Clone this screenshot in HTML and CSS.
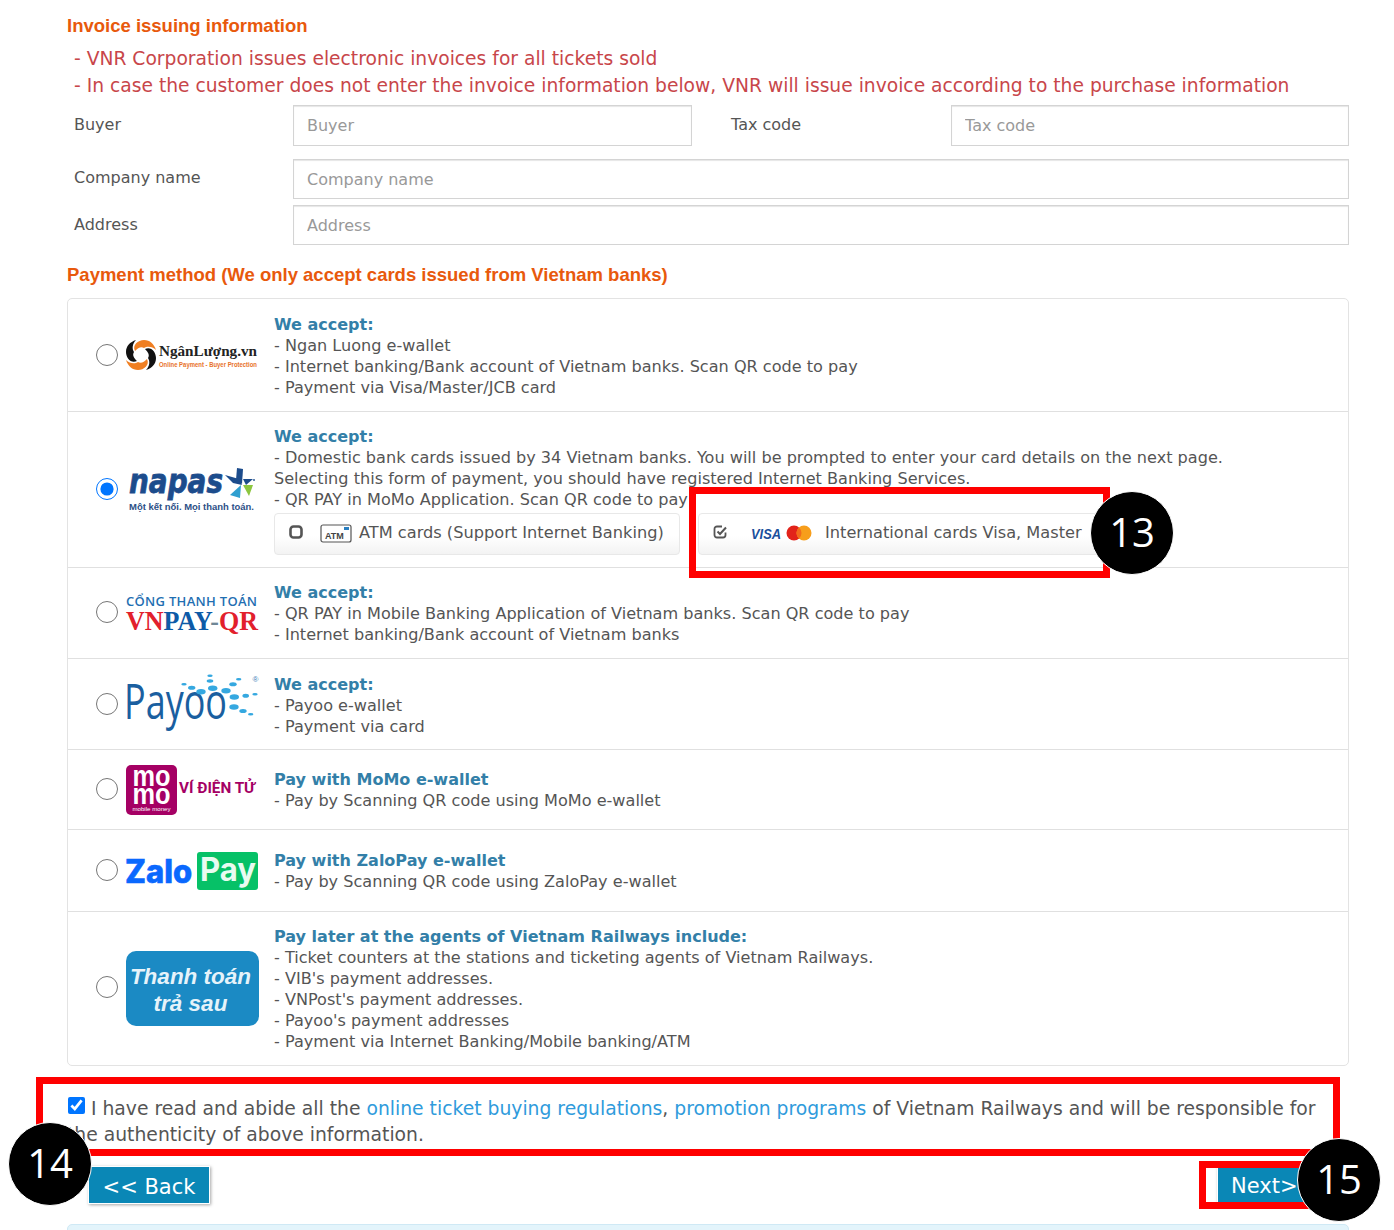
FILE: index.html
```html
<!DOCTYPE html>
<html lang="en">
<head>
    <meta charset="UTF-8">
    <meta name="viewport" content="width=device-width, initial-scale=1.0">
    <title>Payment</title>
    <link rel="stylesheet" href="styles.css">
</head>
<body>
    <div class="page">
        <h3 class="section-title first">Invoice issuing information</h3>
        <div class="invoice-note">
            <p>- VNR Corporation issues electronic invoices for all tickets sold</p>
            <p>- In case the customer does not enter the invoice information below, VNR will issue invoice according to the purchase information</p>
        </div>

        <div class="invoice-form">
            <div class="form-row buyer-row">
                <label>Buyer</label>
                <input type="text" placeholder="Buyer">
                <label class="tax-label">Tax code</label>
                <input type="text" placeholder="Tax code">
            </div>
            <div class="form-row company-row">
                <label>Company name</label>
                <input type="text" placeholder="Company name">
            </div>
            <div class="form-row address-row">
                <label>Address</label>
                <input type="text" placeholder="Address">
            </div>
        </div>

        <h3 class="section-title">Payment method (We only accept cards issued from Vietnam banks)</h3>

        <div class="pay-panel">
            <div class="pay-row row-nl">
                <input type="radio" name="pay">
                <div class="logo">
                    <svg width="134" height="40" viewBox="0 0 134 40">
                        <g transform="translate(15 20)">
                            <path fill="#f07f22" d="M-6-4C-9-10-3-15 3-15 9-15 13-11 15-5 11-9 6-9 3-7 0-9-3-7-6-4Z"/>
                            <path fill="#111" d="M-6-4C-9-10-3-15 3-15 9-15 13-11 15-5 11-9 6-9 3-7 0-9-3-7-6-4Z" transform="rotate(90)"/>
                            <path fill="#f07f22" d="M-6-4C-9-10-3-15 3-15 9-15 13-11 15-5 11-9 6-9 3-7 0-9-3-7-6-4Z" transform="rotate(180)"/>
                            <path fill="#111" d="M-6-4C-9-10-3-15 3-15 9-15 13-11 15-5 11-9 6-9 3-7 0-9-3-7-6-4Z" transform="rotate(270)"/>
                        </g>
                        <text class="nl-name" x="33" y="21" textLength="98" lengthAdjust="spacingAndGlyphs">NgânLượng.vn</text>
                        <text class="nl-sub" x="33" y="32" textLength="98" lengthAdjust="spacingAndGlyphs">Online Payment - Buyer Protection</text>
                    </svg>
                </div>
                <div class="pay-text">
                    <h4>We accept:</h4>
                    <p>- Ngan Luong e-wallet</p>
                    <p>- Internet banking/Bank account of Vietnam banks. Scan QR code to pay</p>
                    <p>- Payment via Visa/Master/JCB card</p>
                </div>
            </div>

            <div class="pay-row row-napas">
                <input type="radio" name="pay" checked>
                <div class="logo">
                    <svg width="134" height="60" viewBox="0 0 134 60">
                        <text class="napas-name" x="3" y="33" textLength="94" lengthAdjust="spacingAndGlyphs">napas</text>
                        <polygon fill="#1c4c8c" points="111,8 117,9 116,24 110,20"/>
                        <polygon fill="#1c4c8c" points="99,15 113,19 116,25 107,23"/>
                        <polygon fill="#1c4c8c" points="117,19 127,19 120,25"/>
                        <polygon fill="#8cc63f" points="117,25 127,25 123,36"/>
                        <polygon fill="#2f9fd0" points="115,25 104,35 114,38"/>
                        <circle cx="128" cy="20" r="0.900" fill="#1c4c8c"/>
                        <text class="napas-sub" x="3" y="50" textLength="125" lengthAdjust="spacingAndGlyphs">Một kết nối. Mọi thanh toán.</text>
                    </svg>
                </div>
                <div class="pay-text">
                    <h4>We accept:</h4>
                    <p>- Domestic bank cards issued by 34 Vietnam banks. You will be prompted to enter your card details on the next page.</p>
                    <p>Selecting this form of payment, you should have registered Internet Banking Services.</p>
                    <p>- QR PAY in MoMo Application. Scan QR code to pay</p>
                    <div class="card-options">
                        <div class="card-btn atm-btn">
                            <svg class="tick" width="16" height="16" viewBox="0 0 16 16">
                                <rect x="2.500" y="2.500" width="11" height="11" rx="3" fill="none" stroke="#555" stroke-width="2.600"/>
                            </svg>
                            <svg class="atm-icon" width="32" height="20" viewBox="0 0 32 20">
                                <rect x="1" y="2" width="30" height="17" rx="2" fill="#fff" stroke="#555" stroke-width="1.200"/>
                                <rect x="24" y="4" width="5" height="3" fill="#2a7fc0"/>
                                <text class="atm-text" x="5" y="16">ATM</text>
                            </svg>
                            <span>ATM cards (Support Internet Banking)</span>
                        </div>
                        <div class="card-btn intl-btn">
                            <svg class="tick" width="16" height="16" viewBox="0 0 16 16">
                                <path d="M13.500 8.500V11a2.500 2.500 0 0 1-2.500 2.500H5A2.500 2.500 0 0 1 2.500 11V5A2.500 2.500 0 0 1 5 2.500h5" fill="none" stroke="#555" stroke-width="1.800"/>
                                <path d="M5.500 7.500l2.500 2.500 6-6.500" fill="none" stroke="#555" stroke-width="2"/>
                            </svg>
                            <svg class="visa-icon" width="64" height="20" viewBox="0 0 64 20">
                                <text class="visa-text" x="1" y="16" textLength="30" lengthAdjust="spacingAndGlyphs">VISA</text>
                                <circle cx="44" cy="10" r="7.500" fill="#e2231a"/>
                                <circle cx="54" cy="10" r="7.500" fill="#f79e1b"/>
                                <path d="M49 4.400a7.500 7.500 0 0 1 0 11.200 7.500 7.500 0 0 1 0-11.200z" fill="#f26a1b"/>
                            </svg>
                            <span>International cards Visa, Master</span>
                        </div>
                    </div>
                </div>
            </div>

            <div class="pay-row row-vnpay">
                <input type="radio" name="pay">
                <div class="logo">
                    <svg width="134" height="50" viewBox="0 0 134 50">
                        <text class="vnpay-top" x="0" y="18" textLength="131" lengthAdjust="spacing">CỔNG THANH TOÁN</text>
                        <text class="vnpay-name" x="0" y="42" textLength="132" lengthAdjust="spacingAndGlyphs"><tspan class="red">VN</tspan><tspan class="blue">PAY</tspan><tspan class="grey">-</tspan><tspan class="red">QR</tspan></text>
                    </svg>
                </div>
                <div class="pay-text">
                    <h4>We accept:</h4>
                    <p>- QR PAY in Mobile Banking Application of Vietnam banks. Scan QR code to pay</p>
                    <p>- Internet banking/Bank account of Vietnam banks</p>
                </div>
            </div>

            <div class="pay-row row-payoo">
                <input type="radio" name="pay">
                <div class="logo">
                    <svg width="134" height="64" viewBox="0 0 134 64">
                        <text class="payoo-name" x="-2" y="47" textLength="103" lengthAdjust="spacingAndGlyphs">Payoo</text>
                        <g fill="#35a8e0">
                            <ellipse cx="58" cy="12.300" rx="2.700" ry="1.300"/>
                            <ellipse cx="65.700" cy="15.700" rx="3.700" ry="2"/>
                            <ellipse cx="75" cy="19.700" rx="4.700" ry="2.700"/>
                            <ellipse cx="86.700" cy="16.300" rx="4.700" ry="2.700"/>
                            <ellipse cx="84" cy="9" rx="3.300" ry="1.700"/>
                            <ellipse cx="84" cy="3.700" rx="2.700" ry="1.300"/>
                            <ellipse cx="100" cy="18.700" rx="4.700" ry="2.700"/>
                            <ellipse cx="107" cy="12.300" rx="3.700" ry="2"/>
                            <ellipse cx="112.700" cy="7.300" rx="2.700" ry="1.300"/>
                            <ellipse cx="108.300" cy="25" rx="4.700" ry="2.700"/>
                            <ellipse cx="119.700" cy="23.700" rx="3.300" ry="2"/>
                            <ellipse cx="129" cy="22.300" rx="2.700" ry="1.300"/>
                            <ellipse cx="108" cy="35" rx="4.700" ry="2.700"/>
                            <ellipse cx="117" cy="39" rx="3.700" ry="2"/>
                            <ellipse cx="124.700" cy="42.300" rx="2.700" ry="1.300"/>
                        </g>
                        <text class="payoo-mark" x="126.500" y="10">®</text>
                    </svg>
                </div>
                <div class="pay-text">
                    <h4>We accept:</h4>
                    <p>- Payoo e-wallet</p>
                    <p>- Payment via card</p>
                </div>
            </div>

            <div class="pay-row row-momo">
                <input type="radio" name="pay">
                <div class="logo">
                    <svg width="134" height="50" viewBox="0 0 134 50">
                        <rect x="0" y="0" width="51" height="50" rx="5" fill="#a50064"/>
                        <text class="momo-name" x="25.500" y="21" textLength="38" lengthAdjust="spacingAndGlyphs">mo</text>
                        <text class="momo-name" x="25.500" y="39" textLength="38" lengthAdjust="spacingAndGlyphs">mo</text>
                        <text class="momo-small" x="25.500" y="46" textLength="38" lengthAdjust="spacingAndGlyphs">mobile money</text>
                        <text class="momo-wallet" x="53" y="28" textLength="76" lengthAdjust="spacingAndGlyphs">VÍ ĐIỆN TỬ</text>
                    </svg>
                </div>
                <div class="pay-text">
                    <h4>Pay with MoMo e-wallet</h4>
                    <p>- Pay by Scanning QR code using MoMo e-wallet</p>
                </div>
            </div>

            <div class="pay-row row-zalo">
                <input type="radio" name="pay">
                <div class="logo">
                    <svg width="134" height="40" viewBox="0 0 134 40">
                        <text class="zalo-name" x="-1" y="32" textLength="67" lengthAdjust="spacingAndGlyphs">Zalo</text>
                        <rect x="71" y="1" width="61" height="38" rx="3" fill="#06c167"/>
                        <text class="zalo-pay" x="74" y="30" textLength="56" lengthAdjust="spacingAndGlyphs">Pay</text>
                    </svg>
                </div>
                <div class="pay-text">
                    <h4>Pay with ZaloPay e-wallet</h4>
                    <p>- Pay by Scanning QR code using ZaloPay e-wallet</p>
                </div>
            </div>

            <div class="pay-row row-later">
                <input type="radio" name="pay">
                <div class="logo">
                    <div class="later-badge">Thanh toán<br>trả sau</div>
                </div>
                <div class="pay-text">
                    <h4>Pay later at the agents of Vietnam Railways include:</h4>
                    <p>- Ticket counters at the stations and ticketing agents of Vietnam Railways.</p>
                    <p>- VIB's payment addresses.</p>
                    <p>- VNPost's payment addresses.</p>
                    <p>- Payoo's payment addresses</p>
                    <p>- Payment via Internet Banking/Mobile banking/ATM</p>
                </div>
            </div>
        </div>

        <div class="agree">
            <input type="checkbox" checked>
            I have read and abide all the <a href="#">online ticket buying regulations</a>, <a href="#">promotion programs</a> of Vietnam Railways and will be responsible for the authenticity of above information.
        </div>

        <div class="actions">
            <button class="btn-back">&lt;&lt; Back</button>
            <button class="btn-next">Next&gt;&gt;</button>
        </div>

        <div class="info-panel"></div>
    </div>

    <!-- annotations on top of the screenshot -->
    <div class="mark box-13"></div>
    <div class="mark box-14"></div>
    <div class="mark box-15"></div>
    <div class="num num-13">13</div>
    <div class="num num-14">14</div>
    <div class="num num-15">15</div>
</body>
</html>
```

FILE: styles.css
```css
html, body {
    height: 1230px;
    overflow: hidden;
}

body {
    font-family: "DejaVu Sans", Verdana, sans-serif;
    font-size: 16px;
    line-height: 21px;
    margin: 0;
    color: #555;
    background-color: #fff;
    position: relative;
}

p {
    margin: 0;
}

.page {
    width: 1282px;
    margin-left: 67px;
    padding-top: 15px;
}

.section-title {
    font-family: "Liberation Sans", Arial, sans-serif;
    font-size: 18.500px;
    line-height: 21px;
    font-weight: bold;
    color: #e8590c;
    margin: 19px 0 13px;
}

.section-title.first {
    margin: 0 0 9px;
}

.invoice-note {
    padding-left: 7px;
    color: #c8464a;
    font-size: 18.700px;
    line-height: 27px;
    white-space: nowrap;
}

.invoice-form {
    margin-top: 6px;
}

.form-row {
    display: grid;
    grid-template-columns: 226px 1fr;
    align-items: start;
}

.buyer-row {
    grid-template-columns: 226px 399px 259px 398px;
    height: 54px;
}

.company-row {
    height: 46px;
}

.address-row {
    height: 40px;
}

.form-row label {
    padding-left: 7px;
    line-height: 37px;
}

.buyer-row label,
.address-row label {
    line-height: 39px;
}

.form-row input {
    font-family: inherit;
    font-size: 16px;
    height: 40px;
    box-sizing: border-box;
    width: 100%;
    padding: 0 13px;
    color: #555;
    background: #fff;
    border: 1px solid #d4d4d4;
    box-shadow: inset 0 1px 1px rgba(0, 0, 0, 0.1);
}

.buyer-row input {
    height: 41px;
}

.form-row input::placeholder {
    color: #999;
    opacity: 1;
}

.form-row .tax-label {
    padding-left: 39px;
}

.pay-panel {
    border: 1px solid #e3e3e3;
    border-radius: 5px;
}

.pay-row {
    display: grid;
    grid-template-columns: 28px 22px 156px 1fr;
    align-items: center;
    box-sizing: border-box;
    border-bottom: 1px solid #e0e0e0;
    padding-top: 15px;
}

.pay-row:last-child {
    border-bottom: none;
}

.pay-row > input {
    grid-column: 2;
    width: 22px;
    height: 22px;
    margin: 0;
}

.logo {
    margin-left: 8px;
    width: 134px;
    display: flex;
    align-items: center;
}

.logo svg {
    overflow: visible;
}

.pay-text {
    align-self: start;
}

.pay-text p {
    font-size: 16.100px;
}

.pay-text h4 {
    margin: 0;
    font-size: 16px;
    line-height: 21px;
    color: #337fa8;
}

.row-nl { height: 113px; }
.row-napas { height: 156px; padding-top: 14px; }
.row-vnpay { height: 91px; padding-top: 14px; }
.row-payoo { height: 91px; }
.row-momo { height: 80px; padding-top: 19px; }
.row-zalo { height: 82px; padding-top: 20px; }
.row-later { height: 153px; padding-top: 14px; }

/* logo and radio sit on the middle of the whole row, not below the padding */
.pay-row > input,
.pay-row > .logo {
    margin-top: -15px;
}

.row-napas > input { margin-top: -16px; }
.row-napas > .logo { margin-top: -14px; }
.row-vnpay > input { margin-top: -16px; }
.row-vnpay > .logo { margin-top: -14px; }
.row-momo > input { margin-top: -21px; }
.row-momo > .logo { margin-top: -19px; }
.row-zalo > input { margin-top: -22px; }
.row-zalo > .logo { margin-top: -20px; }
.row-later > input { margin-top: -18px; }
.row-later > .logo { margin-top: -14px; }

.card-options {
    display: flex;
    gap: 18px;
    margin-top: 3px;
}

.card-btn {
    display: flex;
    align-items: center;
    box-sizing: border-box;
    height: 42px;
    padding-left: 13px;
    padding-bottom: 4px;
    font-size: 16.200px;
    background: linear-gradient(#fff 55%, #f3f3f3);
    border: 1px solid #e8e8e8;
    border-radius: 4px;
    white-space: nowrap;
}

.atm-btn {
    width: 406px;
}

.intl-btn {
    width: 402px;
}

.atm-icon {
    margin: 2px 7px 0 16px;
}

.visa-icon {
    margin: 2px 11px 0 22px;
}

.atm-text {
    font-family: "Liberation Sans", Arial, sans-serif;
    font-size: 9px;
    font-weight: bold;
    fill: #444;
}

.visa-text {
    font-family: "Liberation Sans", Arial, sans-serif;
    font-size: 14px;
    font-weight: bold;
    font-style: italic;
    fill: #1a4f9c;
}

.nl-name {
    font-family: "Liberation Serif", serif;
    font-size: 15px;
    font-weight: bold;
    fill: #222;
}

.nl-sub {
    font-family: "Liberation Sans", Arial, sans-serif;
    font-size: 8px;
    font-weight: bold;
    fill: #e8722a;
}

.napas-name {
    font-family: "DejaVu Sans", sans-serif;
    font-size: 34px;
    font-weight: bold;
    font-style: italic;
    fill: #1c4c8c;
    stroke: #1c4c8c;
    stroke-width: 0.800px;
}

.napas-sub {
    font-family: "Liberation Sans", Arial, sans-serif;
    font-size: 9px;
    font-weight: bold;
    fill: #2c4f86;
}

.vnpay-top {
    font-family: "Open Sans", sans-serif;
    font-size: 13px;
    font-weight: 600;
    fill: #1f6fb2;
}

.vnpay-name {
    font-family: "Liberation Serif", serif;
    font-size: 28px;
    font-weight: bold;
}

.vnpay-name .red { fill: #e2202c; }
.vnpay-name .blue { fill: #0d5aa7; }
.vnpay-name .grey { fill: #6f8796; }

.payoo-name {
    font-family: "Open Sans", sans-serif;
    font-size: 50px;
    fill: #1a5fa0;
}

.payoo-mark {
    font-family: "Liberation Sans", Arial, sans-serif;
    font-size: 8px;
    fill: #3f7fb8;
}

.momo-name {
    font-family: "Liberation Sans", Arial, sans-serif;
    font-size: 30px;
    font-weight: bold;
    fill: #fff;
    text-anchor: middle;
}

.momo-small {
    font-family: "Liberation Sans", Arial, sans-serif;
    font-size: 5px;
    fill: #fff;
    text-anchor: middle;
}

.momo-wallet {
    font-family: "Roboto", sans-serif;
    font-size: 14px;
    font-weight: 700;
    fill: #a50064;
}

.zalo-name {
    font-family: "Inter", sans-serif;
    font-size: 32px;
    font-weight: 800;
    fill: #0a68fe;
    stroke: #0a68fe;
    stroke-width: 0.600px;
}

.zalo-pay {
    font-family: "Inter", sans-serif;
    font-size: 32px;
    font-weight: 700;
    fill: #e9fbf1;
}

.later-badge {
    width: 133px;
    height: 75px;
    box-sizing: border-box;
    padding: 12px 4px 0 0;
    font-family: "Liberation Sans", Arial, sans-serif;
    font-size: 22.500px;
    line-height: 27px;
    font-weight: bold;
    font-style: italic;
    text-align: center;
    color: #e6f3fa;
    background-color: #1b8ac4;
    border-radius: 10px;
}

.agree {
    margin-top: 30px;
    font-size: 18.750px;
    line-height: 26px;
}

.agree input {
    width: 17px;
    height: 17px;
    margin: 0 0 0 1px;
    vertical-align: 1px;
}

.agree a {
    color: #2f9bdc;
    text-decoration: none;
}

.actions {
    display: flex;
    justify-content: space-between;
    align-items: flex-start;
    margin-top: 18px;
    padding: 0 0 0 21px;
}

.actions button {
    font-family: inherit;
    font-size: 21px;
    line-height: 26px;
    color: #fff;
    background-color: #0a87b6;
    border: 1px solid #fff;
    box-shadow: 1px 1px 3px rgba(0, 0, 0, 0.35);
    cursor: pointer;
}

.btn-back {
    width: 122px;
    height: 38px;
    padding: 3px 0 0;
}

.btn-next {
    width: 132px;
    height: 36px;
    margin-top: 1px;
    padding: 2px 0 0 13px;
    text-align: left;
}

.info-panel {
    margin-top: 20px;
    height: 40px;
    background-color: #e3f4fb;
    border: 1px solid #cfe9f5;
    border-radius: 5px;
}

.mark {
    position: absolute;
    box-sizing: border-box;
    border: 7px solid #f00;
}

.box-13 {
    left: 689px;
    top: 487px;
    width: 421px;
    height: 91px;
}

.box-14 {
    left: 36px;
    top: 1077px;
    width: 1304px;
    height: 79px;
}

.box-15 {
    left: 1199px;
    top: 1161px;
    width: 120px;
    height: 48px;
}

.num {
    position: absolute;
    box-sizing: border-box;
    width: 84px;
    height: 84px;
    font-family: "Open Sans", sans-serif;
    font-size: 40px;
    line-height: 80px;
    text-align: center;
    color: #fff;
    background-color: #000;
    border: 1px solid #fff;
    border-radius: 50%;
}

.num-13 { left: 1090px; top: 491px; }
.num-14 { left: 8px; top: 1122px; }
.num-15 { left: 1297px; top: 1138px; }
```
